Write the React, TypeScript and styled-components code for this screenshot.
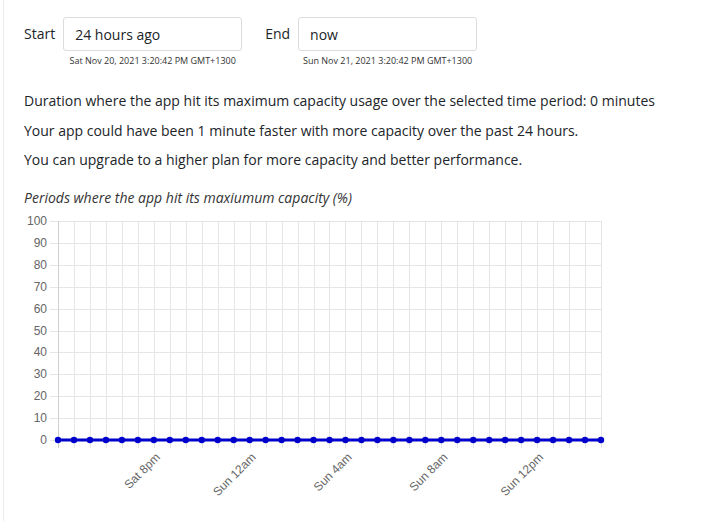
import React from 'react'
import styled, { createGlobalStyle } from 'styled-components'

const GlobalStyle = createGlobalStyle`
	body {
		margin: 0;
		background: #fff;
		font-family: "Open Sans", "Noto Sans", sans-serif;
		color: #212529;
	}
`

const Page = styled.div`
	margin-left: 3px;
	min-height: 100vh;
	box-sizing: border-box;
	border-left: 1px solid #ececec;
	padding: 17px 20px 0 20px;
`

const RangeRow = styled.div`
	display: flex;
	align-items: flex-start;
	gap: 23px;
`

const RangeField = styled.div`
	display: flex;
	align-items: flex-start;
	gap: 8px;
`

const FieldLabel = styled.label`
	font-size: 14px;
	line-height: 34px;
`

const FieldColumn = styled.div`
	display: flex;
	flex-direction: column;
	align-items: center;
	width: 179px;
`

const TextInput = styled.input`
	box-sizing: border-box;
	width: 100%;
	height: 34px;
	border: 1px solid #dcdcdc;
	border-radius: 3px;
	padding: 0 11px;
	font-family: inherit;
	font-size: 14px;
	color: #212529;
	outline: none;
`

const Resolved = styled.div`
	margin-top: 4px;
	font-size: 9px;
	line-height: 12px;
	color: #333;
`

const Summary = styled.div`
	margin-top: 24px;
	display: flex;
	flex-direction: column;
	gap: 10px;
`

const Line = styled.p`
	margin: 0;
	font-size: 14px;
	line-height: 19.5px;
`

const ChartTitle = styled.div`
	margin-top: 18px;
	font-size: 14px;
	font-style: italic;
	line-height: 19px;
	color: #333;
`

const ChartBox = styled.div`
	margin-top: 4px;
	svg {
		display: block;
	}
`

// chart geometry, in page coordinates
const OX = 24
const OY = 211
const X0 = 58
const STEP = 15.97
const COUNT = 35
const YTOP = 221
const YZERO = 440
const LABELS: [number, string][] = [
	[6, 'Sat 8pm'],
	[12, 'Sun 12am'],
	[18, 'Sun 4am'],
	[24, 'Sun 8am'],
	[30, 'Sun 12pm'],
]

const CapacityChart = () => {
	const xs = Array.from({ length: COUNT }, (_, i) => X0 + i * STEP)
	const xEnd = xs[xs.length - 1]
	const rows = Array.from({ length: 11 }, (_, i) => i * 10)
	const yOf = (v: number) => YZERO - ((YZERO - YTOP) * v) / 100
	return (
		<svg width={600} height={300} viewBox={`${OX} ${OY} 600 300`}>
			<g stroke="#e5e5e5" strokeWidth={1} shapeRendering="crispEdges">
				{rows.map((v) => (
					<line key={v} x1={50} x2={xEnd} y1={Math.round(yOf(v)) + 0.5} y2={Math.round(yOf(v)) + 0.5} />
				))}
				{xs.map((x, i) => (
					<line
						key={i}
						x1={Math.round(x) + 0.5}
						x2={Math.round(x) + 0.5}
						y1={YTOP}
						y2={YZERO + 8}
						stroke={i === 0 ? '#cfcfcf' : '#e5e5e5'}
					/>
				))}
			</g>
			<g fill="#666" fontFamily='"Liberation Sans", Arial, sans-serif' fontSize={12}>
				{rows.map((v) => (
					<text key={v} x={47} y={yOf(v) + 4} textAnchor="end">
						{v}
					</text>
				))}
				{LABELS.map(([i, t]) => (
					<text
						key={t}
						x={xs[i] + 7}
						y={458}
						textAnchor="end"
						transform={`rotate(-45 ${xs[i] + 7} 458)`}
					>
						{t}
					</text>
				))}
			</g>
			<line x1={X0} x2={xEnd} y1={YZERO} y2={YZERO} stroke="#0000cc" strokeWidth={3} />
			<g fill="#0000cc">
				{xs.map((x, i) => (
					<circle key={i} cx={x} cy={YZERO} r={3.2} />
				))}
			</g>
		</svg>
	)
}

export default function App() {
	return (
		<>
			<GlobalStyle />
			<Page>
				<RangeRow>
					<RangeField>
						<FieldLabel>Start</FieldLabel>
						<FieldColumn>
							<TextInput defaultValue="24 hours ago" />
							<Resolved>Sat Nov 20, 2021 3:20:42 PM GMT+1300</Resolved>
						</FieldColumn>
					</RangeField>
					<RangeField>
						<FieldLabel>End</FieldLabel>
						<FieldColumn>
							<TextInput defaultValue="now" />
							<Resolved>Sun Nov 21, 2021 3:20:42 PM GMT+1300</Resolved>
						</FieldColumn>
					</RangeField>
				</RangeRow>
				<Summary>
					<Line>Duration where the app hit its maximum capacity usage over the selected time period: 0 minutes</Line>
					<Line>Your app could have been 1 minute faster with more capacity over the past 24 hours.</Line>
					<Line>You can upgrade to a higher plan for more capacity and better performance.</Line>
				</Summary>
				<ChartTitle>Periods where the app hit its maxiumum capacity (%)</ChartTitle>
				<ChartBox>
					<CapacityChart />
				</ChartBox>
			</Page>
		</>
	)
}
